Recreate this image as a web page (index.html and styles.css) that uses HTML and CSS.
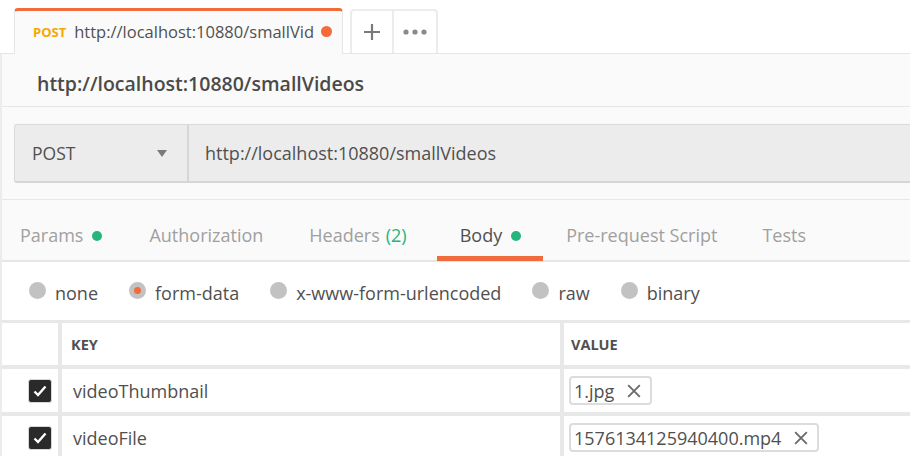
FILE: index.html
```html
<!DOCTYPE html>
<html>
<head>
<meta charset="utf-8">
<link rel="stylesheet" href="styles.css">
</head>
<body>
<div class="app">
  <div class="tabbar">
    <div class="tab">
      <span class="tab-method">POST</span>
      <span class="tab-url">http://localhost:10880/smallVid</span>
      <span class="tab-dot"></span>
    </div>
    <div class="tab-btn">
      <svg width="18" height="18" viewBox="0 0 18 18"><path d="M9 1v16M1 9h16" stroke="#7a7a7a" stroke-width="2.2"/></svg>
    </div>
    <div class="tab-btn">
      <svg width="24" height="6" viewBox="0 0 24 6"><circle cx="3" cy="3" r="2.6" fill="#8a8a8a"/><circle cx="12" cy="3" r="2.6" fill="#8a8a8a"/><circle cx="21" cy="3" r="2.6" fill="#8a8a8a"/></svg>
    </div>
  </div>
  <div class="main">
    <div class="title">http://localhost:10880/smallVideos</div>
    <div class="req">
      <div class="reqbar">
        <div class="method"><span>POST</span><span class="caret"></span></div>
        <div class="url">http://localhost:10880/smallVideos</div>
      </div>
    </div>
    <div class="reqtabs">
      <div class="rtab t-params">Params <span class="gdot"></span></div>
      <div class="rtab t-auth">Authorization</div>
      <div class="rtab t-headers">Headers <span class="green">(2)</span></div>
      <div class="rtab t-body active">Body <span class="gdot"></span></div>
      <div class="rtab t-pre">Pre-request Script</div>
      <div class="rtab">Tests</div>
    </div>
    <div class="body">
      <div class="radios">
        <label class="radio"><span class="rc"></span>none</label>
        <label class="radio"><span class="rc on"></span>form-data</label>
        <label class="radio"><span class="rc"></span>x-www-form-urlencoded</label>
        <label class="radio"><span class="rc"></span>raw</label>
        <label class="radio"><span class="rc"></span>binary</label>
      </div>
      <div class="table">
        <div class="row head">
          <div class="c0"></div>
          <div class="c1">KEY</div>
          <div class="c2">VALUE</div>
        </div>
        <div class="row">
          <div class="c0"><span class="cb"><svg width="14" height="12" viewBox="0 0 14 12"><path d="M1.5 6.5l3.5 3.5 7.5-8.5" fill="none" stroke="#fff" stroke-width="2.4"/></svg></span></div>
          <div class="c1">videoThumbnail</div>
          <div class="c2"><span class="chip">1.jpg<svg class="x" width="14" height="14" viewBox="0 0 12 12"><path d="M1 1l10 10M11 1L1 11" stroke="#6a6a6a" stroke-width="1.6"/></svg></span></div>
        </div>
        <div class="row">
          <div class="c0"><span class="cb"><svg width="14" height="12" viewBox="0 0 14 12"><path d="M1.5 6.5l3.5 3.5 7.5-8.5" fill="none" stroke="#fff" stroke-width="2.4"/></svg></span></div>
          <div class="c1">videoFile</div>
          <div class="c2"><span class="chip">1576134125940400.mp4<svg class="x" width="14" height="14" viewBox="0 0 12 12"><path d="M1 1l10 10M11 1L1 11" stroke="#6a6a6a" stroke-width="1.6"/></svg></span></div>
        </div>
      </div>
    </div>
  </div>
</div>
</body>
</html>
```
FILE: styles.css
```css
* { box-sizing: border-box; }
html, body { margin: 0; padding: 0; }
body {
  font-family: "Open Sans", "Liberation Sans", sans-serif;
  color: #505050;
  background: #fff;
  width: 910px;
  height: 456px;
  overflow: hidden;
}
.app { width: 910px; }
.tabbar {
  height: 54px;
  display: flex;
  align-items: flex-end;
  padding-left: 14px;
  background: #fff;
  border-bottom: 1px solid #e6e6e6;
}
.tab {
  width: 329px;
  height: 46px;
  margin-bottom: -1px;
  background: #fafafa;
  border: 1px solid #e6e6e6;
  border-top: 3px solid #f26b3a;
  border-bottom: none;
  border-radius: 4px 4px 0 0;
  display: flex;
  align-items: center;
  padding-left: 18px;
  padding-bottom: 2px;
  white-space: nowrap;
}
.tab-method {
  color: #f5a800;
  font-weight: 700;
  font-size: 13px;
  margin-right: 8px;
}
.tab-url { font-size: 16.5px; color: #505050; }
.tab-dot {
  width: 11px; height: 11px; border-radius: 50%;
  background: #f26b3a;
  margin-left: 7px;
  flex: none;
}
.tab-btn {
  width: 44px;
  height: 44px;
  border: 2px solid #ececec;
  border-bottom: none;
  background: #fff;
  display: flex;
  align-items: center;
  justify-content: center;
}
.tab + .tab-btn { margin-left: 7px; border-radius: 4px 0 0 0; }
.tab-btn:last-child { border-radius: 0 4px 0 0; border-left: none; }
.main {
  background: #fafafa;
  border-left: 2px solid #ececec;
}
.title {
  height: 53px;
  padding-left: 35px;
  padding-top: 7px;
  display: flex;
  align-items: center;
  font-size: 19.5px;
  font-weight: 600;
  color: #4a4a4a;
  border-bottom: 1px solid #e6e6e6;
}
.req {
  padding: 17px 0 16px 12px;
  border-bottom: 1px solid #e8e8e8;
}
.reqbar {
  height: 59px;
  display: flex;
  background: #ececec;
  border: 1px solid #dadada;
  border-bottom: 2px solid #d6d6d6;
  border-right: none;
  border-radius: 3px 0 0 3px;
}
.method {
  width: 174px;
  border-right: 2px solid #d6d6d6;
  display: flex;
  align-items: center;
  justify-content: space-between;
  padding: 0 20px 0 17px;
  font-size: 17.5px;
  color: #505050;
}
.caret {
  width: 0; height: 0;
  border-left: 5px solid transparent;
  border-right: 5px solid transparent;
  border-top: 7px solid #7a7a7a;
}
.url {
  display: flex;
  align-items: center;
  padding-left: 16px;
  font-size: 18px;
  color: #505050;
}
.reqtabs {
  height: 62px;
  display: flex;
  align-items: stretch;
  padding-left: 18px;
  border-bottom: 2px solid #e6e6e6;
}
.rtab {
  display: flex;
  align-items: center;
  font-size: 18px;
  color: #a0a0a0;
  margin-right: 46px;
  position: relative;
  padding-top: 10px;
  white-space: nowrap;
}
.t-params { margin-right: 47px; }
.t-auth { margin-right: 46px; }
.t-headers { margin-right: 53px; }
.t-body { margin-right: 45px; }
.t-pre { margin-right: 45px; }
.rtab.active { color: #505050; }
.rtab.active::after {
  content: "";
  position: absolute;
  left: -23px; right: -22px; bottom: -1px;
  height: 5px;
  background: #f26b3a;
}
.gdot {
  display: inline-block;
  width: 10px; height: 10px; border-radius: 50%;
  background: #26b47f;
  margin-left: 9px;
  margin-top: 2px;
}
.green { color: #26b47f; margin-left: 6px; }
.body { background: #fff; }
.radios {
  height: 58px;
  display: flex;
  align-items: center;
  padding-left: 27px;
  padding-top: 4px;
  font-size: 18px;
}
.radio {
  display: flex;
  align-items: center;
  margin-right: 31px;
  color: #505050;
  white-space: nowrap;
}
.rc {
  width: 17px; height: 17px; border-radius: 50%;
  background: #c2c2c2;
  margin-right: 9px;
  margin-top: -6px;
  display: flex;
  align-items: center;
  justify-content: center;
}
.rc.on::after {
  content: "";
  width: 7px; height: 7px; border-radius: 50%;
  background: #f26b3a;
}
.table { border-top: 3px solid #e8e8e8; }
.row {
  display: flex;
  height: 47px;
  border-bottom: 4px solid #e8e8e8;
}
.row.head { height: 46px; }
.c0 {
  width: 60px;
  border-right: 4px solid #e8e8e8;
  display: flex;
  align-items: center;
  padding-left: 26px;
}
.c1 {
  width: 502px;
  border-right: 4px solid #e8e8e8;
  display: flex;
  align-items: center;
  padding-left: 11px;
  font-size: 18px;
  color: #505050;
  white-space: nowrap;
}
.c2 {
  flex: 1;
  display: flex;
  align-items: center;
  padding-left: 5px;
  font-size: 18px;
}
.head .c1, .head .c2 {
  font-size: 14.5px;
  font-weight: 700;
  color: #505050;
  padding-left: 9px;
}
.head .c2 { padding-left: 7px; }
.cb {
  width: 24px; height: 24px;
  border-radius: 3px;
  background: #2a2a2a;
  border: 1px solid #d8d8d8;
  display: flex;
  align-items: center;
  justify-content: center;
}
.chip {
  display: inline-flex;
  align-items: center;
  height: 29px;
  padding: 0 9px 0 3px;
  border: 2px solid #dcdcdc;
  border-radius: 4px;
  font-size: 18px;
  color: #505050;
  white-space: nowrap;
}
.chip .x { margin-left: 13px; }
```
